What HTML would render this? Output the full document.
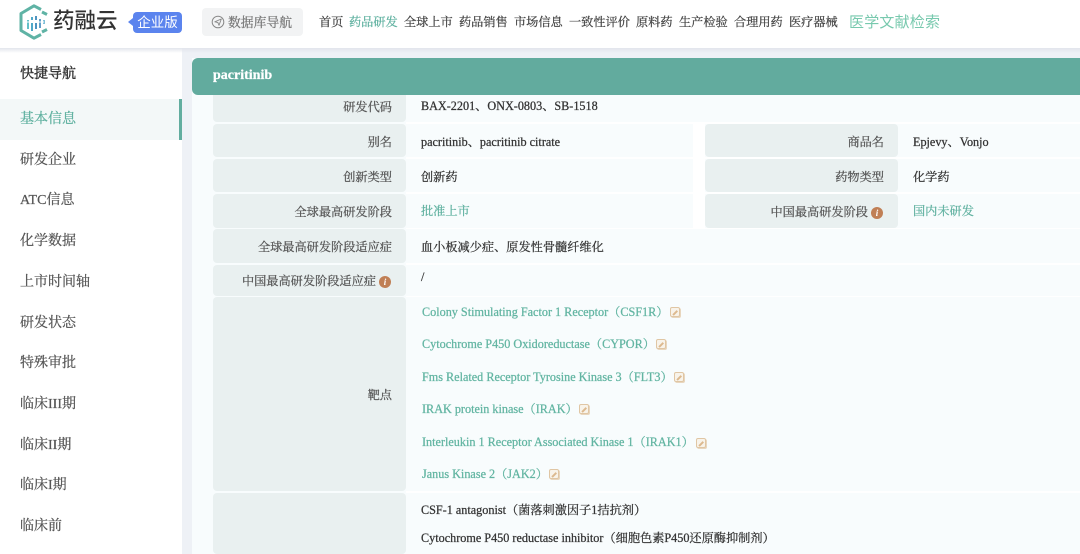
<!DOCTYPE html>
<html lang="zh"><head><meta charset="utf-8"><title>药融云</title>
<style>
html,body{margin:0;padding:0}
body{width:1080px;height:554px;overflow:hidden;position:relative;background:#eef1f6;font-family:"Liberation Serif","Noto Serif CJK SC",serif;color:#333;-webkit-text-stroke:.25px currentColor}
.a,.t{position:absolute;white-space:nowrap}
.t{line-height:16px}
.sans{font-family:"Liberation Sans","Noto Sans CJK SC",sans-serif}
.n{font-size:12.2px;top:14px;color:#444}
.g{color:#5eb09f}
.s{left:20px;font-size:14px;color:#555;line-height:20px;position:absolute;white-space:nowrap}
.l{position:absolute;background:#e9f0f0;border-radius:4px}
.r{position:absolute;text-align:right;font-size:12.2px;color:#555;line-height:16px;white-space:nowrap}
.v{position:absolute;font-size:12.2px;color:#333;line-height:16px;white-space:nowrap}
.k{position:absolute;left:422px;font-size:12.2px;color:#62b5a2;line-height:16px;white-space:nowrap}
.i{display:inline-block;width:12px;height:12px;border-radius:50%;background:#c07f55;color:#fff;font:italic bold 9px/12px "Liberation Serif",serif;text-align:center;vertical-align:0;margin-left:3px;-webkit-text-stroke:0}
.e{position:absolute;width:8px;height:8px;border:1.5px solid #e0c6a4;border-radius:2px;background:#f8f3ea;box-shadow:1px 1px 0 #e8d6be}
.e:after{content:"";position:absolute;left:1px;top:3.5px;width:6px;height:1.5px;background:#dcb98f;transform:rotate(-45deg)}
</style></head><body>

<div class="a" style="left:0;top:0;width:1080px;height:48px;background:#fff"></div>
<svg class="a" style="left:19px;top:4px" width="30" height="36" viewBox="0 0 30 36">
<path d="M22 5.5 L15 1.8 L2 9.5 V26.5 L15 34.2 L22 30.5" fill="none" stroke="#5fb3a5" stroke-width="3" stroke-linejoin="round"/>
<path d="M23 8 L28 10.5 M28 25.5 L23 28" fill="none" stroke="#5fb3a5" stroke-width="3"/>
<g stroke-width="2"><path d="M9 16v9" stroke="#63c0c8"/><path d="M13 13v3M13 19v8" stroke="#4fa8c8"/><path d="M17 12v4M17 19v6" stroke="#4f94c0"/><path d="M21 15v9" stroke="#5f9fc8"/><path d="M25 16v4" stroke="#7fc0d8"/></g>
<path d="M7 18h18" stroke="#fff" stroke-width="1"/>
</svg>
<div class="t sans" style="left:53px;top:4px;font-size:21.5px;line-height:34px;color:#333;font-weight:500;-webkit-text-stroke:0">药融云</div>
<div class="a" style="left:128px;top:18px;width:0;height:0;border:4px solid transparent;border-right:5px solid #5b84ee;border-left:0"></div>
<div class="t sans" style="left:133px;top:12px;width:49px;height:21px;line-height:21px;background:#5b84ee;color:#fff;border-radius:4px;text-align:center;font-size:13.5px;-webkit-text-stroke:0">企业版</div>
<div class="a" style="left:202px;top:8px;width:101px;height:28px;background:#f2f3f4;border-radius:4px"></div>
<svg class="a" style="left:211px;top:15px" width="14" height="14" viewBox="0 0 14 14"><circle cx="7" cy="7" r="5.8" fill="none" stroke="#888" stroke-width="1"/><path d="M3.8 6.8L10.3 4L8 10.3L6.9 7.6Z" fill="none" stroke="#888" stroke-width=".9" stroke-linejoin="round"/></svg>
<div class="t" style="left:228px;top:15px;font-size:12.8px;color:#777">数据库导航</div>

<div class="t n" style="left:319px">首页</div>
<div class="t n g" style="left:349px">药品研发</div>
<div class="t n" style="left:404px">全球上市</div>
<div class="t n" style="left:459px">药品销售</div>
<div class="t n" style="left:514px">市场信息</div>
<div class="t n" style="left:569px">一致性评价</div>
<div class="t n" style="left:636px">原料药</div>
<div class="t n" style="left:679px">生产检验</div>
<div class="t n" style="left:734px">合理用药</div>
<div class="t n" style="left:789px">医疗器械</div>
<div class="t sans" style="left:849px;top:13px;font-size:15px;line-height:20px;color:#78c9ae;letter-spacing:.2px;-webkit-text-stroke:0">医学文献检索</div>

<div class="a" style="left:0;top:48px;width:182px;height:506px;background:#fff"></div>
<div class="t" style="left:20px;top:67px;font-size:14px;color:#333;-webkit-text-stroke:.4px #333">快捷导航</div>
<div class="a" style="left:0;top:99px;width:182px;height:41px;background:#f3f8f8"></div>
<div class="a" style="left:179px;top:99px;width:3px;height:41px;background:#62ad9f"></div>
<div class="s" style="top:110px;color:#5eb09f">基本信息</div>
<div class="s" style="top:151px">研发企业</div>
<div class="s" style="top:191px">ATC信息</div>
<div class="s" style="top:232px">化学数据</div>
<div class="s" style="top:273px">上市时间轴</div>
<div class="s" style="top:314px">研发状态</div>
<div class="s" style="top:354px">特殊审批</div>
<div class="s" style="top:395px">临床III期</div>
<div class="s" style="top:436px">临床II期</div>
<div class="s" style="top:476px">临床I期</div>
<div class="s" style="top:517px">临床前</div>

<div class="a" style="left:192px;top:58px;width:888px;height:496px;background:#f8fcfd"></div>
<div class="a" style="left:192px;top:58px;width:888px;height:37px;background:#62ab9e;border-radius:6px 0 0 6px"></div>
<div class="t" style="left:213px;top:67px;font-size:14px;line-height:18px;color:#fff;font-weight:bold">pacritinib</div>

<div class="l" style="left:213px;top:95px;width:193px;height:27px;border-radius:0 0 4px 4px"></div>
<div class="l" style="left:213px;top:124px;width:193px;height:33px"></div>
<div class="l" style="left:213px;top:159px;width:193px;height:33px"></div>
<div class="l" style="left:213px;top:194px;width:193px;height:34px"></div>
<div class="l" style="left:213px;top:229px;width:193px;height:34px"></div>
<div class="l" style="left:213px;top:265px;width:193px;height:31px"></div>
<div class="l" style="left:213px;top:297px;width:193px;height:194px"></div>
<div class="l" style="left:213px;top:493px;width:193px;height:61px"></div>
<div class="l" style="left:705px;top:124px;width:193px;height:33px"></div>
<div class="l" style="left:705px;top:159px;width:193px;height:33px"></div>
<div class="l" style="left:705px;top:194px;width:193px;height:34px"></div>
<div class="a" style="left:406px;top:122px;width:674px;height:2px;background:#fff"></div>
<div class="a" style="left:406px;top:157px;width:674px;height:2px;background:#fff"></div>
<div class="a" style="left:406px;top:192px;width:674px;height:2px;background:#fff"></div>
<div class="a" style="left:406px;top:228px;width:674px;height:1px;background:#fff"></div>
<div class="a" style="left:406px;top:263px;width:674px;height:2px;background:#fff"></div>
<div class="a" style="left:406px;top:296px;width:674px;height:1px;background:#fff"></div>
<div class="a" style="left:406px;top:491px;width:674px;height:2px;background:#fff"></div>
<div class="a" style="left:693px;top:124px;width:12px;height:104px;background:#fff"></div>

<div class="r" style="right:688px;top:99px">研发代码</div>
<div class="r" style="right:688px;top:134px">别名</div>
<div class="r" style="right:688px;top:169px">创新类型</div>
<div class="r" style="right:688px;top:204px">全球最高研发阶段</div>
<div class="r" style="right:688px;top:239px">全球最高研发阶段适应症</div>
<div class="r" style="right:689px;top:273px">中国最高研发阶段适应症<span class="i">i</span></div>
<div class="r" style="right:688px;top:387px">靶点</div>
<div class="r" style="right:196px;top:134px">商品名</div>
<div class="r" style="right:196px;top:169px">药物类型</div>
<div class="r" style="right:197px;top:204px">中国最高研发阶段<span class="i">i</span></div>

<div class="v" style="left:421px;top:98px">BAX-2201、ONX-0803、SB-1518</div>
<div class="v" style="left:421px;top:134px">pacritinib、pacritinib citrate</div>
<div class="v" style="left:421px;top:169px">创新药</div>
<div class="v g" style="left:421px;top:203px;color:#5eb09f">批准上市</div>
<div class="v" style="left:421px;top:239px">血小板减少症、原发性骨髓纤维化</div>
<div class="v" style="left:421px;top:269px">/</div>
<div class="v" style="left:913px;top:134px">Epjevy、Vonjo</div>
<div class="v" style="left:913px;top:169px">化学药</div>
<div class="v" style="left:913px;top:203px;color:#5eb09f">国内未研发</div>

<div class="k" style="top:304px">Colony Stimulating Factor 1 Receptor（CSF1R）</div><div class="e" style="left:670px;top:307px"></div>
<div class="k" style="top:336px">Cytochrome P450 Oxidoreductase（CYPOR）</div><div class="e" style="left:656px;top:339px"></div>
<div class="k" style="top:369px">Fms Related Receptor Tyrosine Kinase 3（FLT3）</div><div class="e" style="left:674px;top:372px"></div>
<div class="k" style="top:401px">IRAK protein kinase（IRAK）</div><div class="e" style="left:579px;top:404px"></div>
<div class="k" style="top:434px">Interleukin 1 Receptor Associated Kinase 1（IRAK1）</div><div class="e" style="left:696px;top:438px"></div>
<div class="k" style="top:466px">Janus Kinase 2（JAK2）</div><div class="e" style="left:549px;top:469px"></div>

<div class="v" style="left:421px;top:502px">CSF-1 antagonist（菌落刺激因子1拮抗剂）</div>
<div class="v" style="left:421px;top:530px">Cytochrome P450 reductase inhibitor（细胞色素P450还原酶抑制剂）</div>

<div class="a" style="left:0;top:48px;width:1080px;height:5px;background:linear-gradient(#e2e5ec,rgba(226,229,236,0))"></div>
</body></html>
